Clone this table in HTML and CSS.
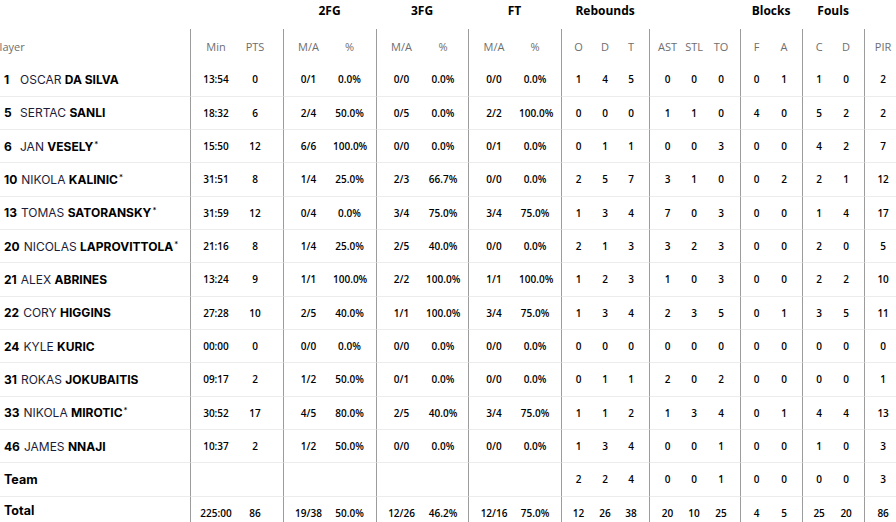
FILE: index.html
```html
<!DOCTYPE html>
<html lang="en">
<head>
<meta charset="utf-8">
<title>Box score</title>
<link rel="stylesheet" href="styles.css">
</head>
<body>
<div class="wrap">
<table class="box">
<colgroup>
<col class="c-player"><col class="c-min"><col class="c-pts">
<col class="c-ma"><col class="c-pc"><col class="c-ma"><col class="c-pc2"><col class="c-ma1"><col class="c-pc2">
<col class="c-r1"><col class="c-r2"><col class="c-r1">
<col class="c-a"><col class="c-a"><col class="c-a1">
<col class="c-b"><col class="c-b"><col class="c-b"><col class="c-b"><col class="c-pir">
</colgroup>
<thead>
<tr class="groups">
<th></th><th colspan="2"></th><th colspan="2">2FG</th><th colspan="2">3FG</th><th colspan="2">FT</th><th colspan="3">Rebounds</th><th colspan="3"></th><th colspan="2">Blocks</th><th colspan="2">Fouls</th><th></th>
</tr>
<tr class="sub">
<th class="player">Player</th><th>Min</th><th>PTS</th><th>M/A</th><th>%</th><th>M/A</th><th>%</th><th>M/A</th><th>%</th><th>O</th><th>D</th><th>T</th><th>AST</th><th>STL</th><th>TO</th><th>F</th><th>A</th><th>C</th><th>D</th><th>PIR</th>
</tr>
</thead>
<tbody>
<tr><td class="player"><span class="num">1</span><span class="first">OSCAR</span> <b>DA SILVA</b></td><td>13:54</td><td>0</td><td>0/1</td><td>0.0%</td><td>0/0</td><td>0.0%</td><td>0/0</td><td>0.0%</td><td>1</td><td>4</td><td>5</td><td>0</td><td>0</td><td>0</td><td>0</td><td>1</td><td>1</td><td>0</td><td>2</td></tr>
<tr><td class="player"><span class="num">5</span><span class="first">SERTAC</span> <b>SANLI</b></td><td>18:32</td><td>6</td><td>2/4</td><td>50.0%</td><td>0/5</td><td>0.0%</td><td>2/2</td><td>100.0%</td><td>0</td><td>0</td><td>0</td><td>1</td><td>1</td><td>0</td><td>4</td><td>0</td><td>5</td><td>2</td><td>2</td></tr>
<tr><td class="player"><span class="num">6</span><span class="first">JAN</span> <b>VESELY</b><sup class="star">*</sup></td><td>15:50</td><td>12</td><td>6/6</td><td>100.0%</td><td>0/0</td><td>0.0%</td><td>0/1</td><td>0.0%</td><td>0</td><td>1</td><td>1</td><td>0</td><td>0</td><td>3</td><td>0</td><td>0</td><td>4</td><td>2</td><td>7</td></tr>
<tr><td class="player"><span class="num">10</span><span class="first">NIKOLA</span> <b>KALINIC</b><sup class="star">*</sup></td><td>31:51</td><td>8</td><td>1/4</td><td>25.0%</td><td>2/3</td><td>66.7%</td><td>0/0</td><td>0.0%</td><td>2</td><td>5</td><td>7</td><td>3</td><td>1</td><td>0</td><td>0</td><td>2</td><td>2</td><td>1</td><td>12</td></tr>
<tr><td class="player"><span class="num">13</span><span class="first">TOMAS</span> <b>SATORANSKY</b><sup class="star">*</sup></td><td>31:59</td><td>12</td><td>0/4</td><td>0.0%</td><td>3/4</td><td>75.0%</td><td>3/4</td><td>75.0%</td><td>1</td><td>3</td><td>4</td><td>7</td><td>0</td><td>3</td><td>0</td><td>0</td><td>1</td><td>4</td><td>17</td></tr>
<tr><td class="player"><span class="num">20</span><span class="first">NICOLAS</span> <b>LAPROVITTOLA</b><sup class="star">*</sup></td><td>21:16</td><td>8</td><td>1/4</td><td>25.0%</td><td>2/5</td><td>40.0%</td><td>0/0</td><td>0.0%</td><td>2</td><td>1</td><td>3</td><td>3</td><td>2</td><td>3</td><td>0</td><td>0</td><td>2</td><td>0</td><td>5</td></tr>
<tr><td class="player"><span class="num">21</span><span class="first">ALEX</span> <b>ABRINES</b></td><td>13:24</td><td>9</td><td>1/1</td><td>100.0%</td><td>2/2</td><td>100.0%</td><td>1/1</td><td>100.0%</td><td>1</td><td>2</td><td>3</td><td>1</td><td>0</td><td>3</td><td>0</td><td>0</td><td>2</td><td>2</td><td>10</td></tr>
<tr><td class="player"><span class="num">22</span><span class="first">CORY</span> <b>HIGGINS</b></td><td>27:28</td><td>10</td><td>2/5</td><td>40.0%</td><td>1/1</td><td>100.0%</td><td>3/4</td><td>75.0%</td><td>1</td><td>3</td><td>4</td><td>2</td><td>3</td><td>5</td><td>0</td><td>1</td><td>3</td><td>5</td><td>11</td></tr>
<tr><td class="player"><span class="num">24</span><span class="first">KYLE</span> <b>KURIC</b></td><td>00:00</td><td>0</td><td>0/0</td><td>0.0%</td><td>0/0</td><td>0.0%</td><td>0/0</td><td>0.0%</td><td>0</td><td>0</td><td>0</td><td>0</td><td>0</td><td>0</td><td>0</td><td>0</td><td>0</td><td>0</td><td>0</td></tr>
<tr><td class="player"><span class="num">31</span><span class="first">ROKAS</span> <b>JOKUBAITIS</b></td><td>09:17</td><td>2</td><td>1/2</td><td>50.0%</td><td>0/1</td><td>0.0%</td><td>0/0</td><td>0.0%</td><td>0</td><td>1</td><td>1</td><td>2</td><td>0</td><td>2</td><td>0</td><td>0</td><td>0</td><td>0</td><td>1</td></tr>
<tr><td class="player"><span class="num">33</span><span class="first">NIKOLA</span> <b>MIROTIC</b><sup class="star">*</sup></td><td>30:52</td><td>17</td><td>4/5</td><td>80.0%</td><td>2/5</td><td>40.0%</td><td>3/4</td><td>75.0%</td><td>1</td><td>1</td><td>2</td><td>1</td><td>3</td><td>4</td><td>0</td><td>1</td><td>4</td><td>4</td><td>13</td></tr>
<tr><td class="player"><span class="num">46</span><span class="first">JAMES</span> <b>NNAJI</b></td><td>10:37</td><td>2</td><td>1/2</td><td>50.0%</td><td>0/0</td><td>0.0%</td><td>0/0</td><td>0.0%</td><td>1</td><td>3</td><td>4</td><td>0</td><td>0</td><td>1</td><td>0</td><td>0</td><td>1</td><td>0</td><td>3</td></tr>
<tr><td class="player label">Team</td><td></td><td></td><td></td><td></td><td></td><td></td><td></td><td></td><td>2</td><td>2</td><td>4</td><td>0</td><td>0</td><td>1</td><td>0</td><td>0</td><td>0</td><td>0</td><td>3</td></tr>
<tr class="total"><td class="player label">Total</td><td>225:00</td><td>86</td><td>19/38</td><td>50.0%</td><td>12/26</td><td>46.2%</td><td>12/16</td><td>75.0%</td><td>12</td><td>26</td><td>38</td><td>20</td><td>10</td><td>25</td><td>4</td><td>5</td><td>25</td><td>20</td><td>86</td></tr>
</tbody>
</table>
</div>
</body>
</html>
```

FILE: styles.css
```css
html, body {
  margin: 0;
  padding: 0;
  background: #ffffff;
  overflow: hidden;
}

.wrap {
  margin-left: -10px;
}

.box {
  table-layout: fixed;
  width: 911px;
  border-collapse: separate;
  border-spacing: 0;
  font-family: "Open Sans", "Noto Sans", sans-serif;
  color: #000000;
}

.c-player { width: 200px; }
.c-min { width: 51px; }
.c-pts { width: 42px; }
.c-ma { width: 50px; }
.c-pc { width: 43px; }
.c-pc2 { width: 42px; }
.c-ma1 { width: 51px; }
.c-r1 { width: 29px; }
.c-r2 { width: 30px; }
.c-a { width: 30px; }
.c-a1 { width: 31px; }
.c-b { width: 31px; }
.c-pir { width: 37px; }

.box th,
.box td {
  padding: 0;
  text-align: center;
  vertical-align: middle;
  white-space: nowrap;
  box-sizing: border-box;
}

.groups {
  height: 29px;
}

.groups th {
  font-size: 12px;
  font-weight: 700;
  color: #000000;
  vertical-align: top;
  padding-top: 2px;
}

.sub {
  height: 34.33px;
}

.sub th {
  font-size: 11px;
  font-weight: 400;
  color: #6e6e6e;
}

.sub th.player {
  text-align: left;
  padding-left: 3px;
}

tbody tr {
  height: 33.33px;
}

tbody td {
  font-size: 10px;
  font-weight: 600;
  border-bottom: 1px solid #ececec;
}

.total td {
  border-bottom: none;
}

td.player {
  text-align: left;
  padding-left: 14px;
  font-family: Inter, "Liberation Sans", sans-serif;
  font-size: 12px;
  font-weight: 400;
  color: #1c1c38;
}

td.player b {
  font-weight: 700;
  color: #000000;
}

.num {
  display: inline-block;
  min-width: 12px;
  margin-right: 4px;
  font-weight: 700;
  color: #000000;
}

.star {
  font-size: 8px;
  line-height: 0;
  vertical-align: 4px;
  margin-left: 1px;
  color: #000000;
}

td.label {
  font-weight: 700;
  font-size: 12.5px;
  color: #000000;
}

.total td.label {
  vertical-align: top;
  padding-top: 6px;
}

/* vertical group separators */
.sub th:nth-child(2), tbody td:nth-child(2),
.sub th:nth-child(4), tbody td:nth-child(4),
.sub th:nth-child(6), tbody td:nth-child(6),
.sub th:nth-child(8), tbody td:nth-child(8),
.sub th:nth-child(10), tbody td:nth-child(10),
.sub th:nth-child(13), tbody td:nth-child(13),
.sub th:nth-child(16), tbody td:nth-child(16),
.sub th:nth-child(18), tbody td:nth-child(18),
.sub th:nth-child(20), tbody td:nth-child(20) {
  border-left: 1px solid #9c9c9c;
}

/* content offsets inside groups */
.sub th:nth-child(3), tbody td:nth-child(3) { padding-right: 14px; }
.sub th:nth-child(5), tbody td:nth-child(5) { padding-right: 10px; }
.sub th:nth-child(7), tbody td:nth-child(7) { padding-right: 8px; }
.sub th:nth-child(9), tbody td:nth-child(9) { padding-right: 10px; }
.sub th:nth-child(10), tbody td:nth-child(10) { padding-left: 5px; }
.sub th:nth-child(12), tbody td:nth-child(12) { padding-right: 7px; }
.sub th:nth-child(13), tbody td:nth-child(13) { padding-left: 6px; }
.sub th:nth-child(15), tbody td:nth-child(15) { padding-right: 7px; }
.sub th:nth-child(16), tbody td:nth-child(16) { padding-left: 1px; }
.sub th:nth-child(17), tbody td:nth-child(17) { padding-right: 5px; }
.sub th:nth-child(18), tbody td:nth-child(18) { padding-left: 2px; }
.sub th:nth-child(19), tbody td:nth-child(19) { padding-right: 5px; }
```
